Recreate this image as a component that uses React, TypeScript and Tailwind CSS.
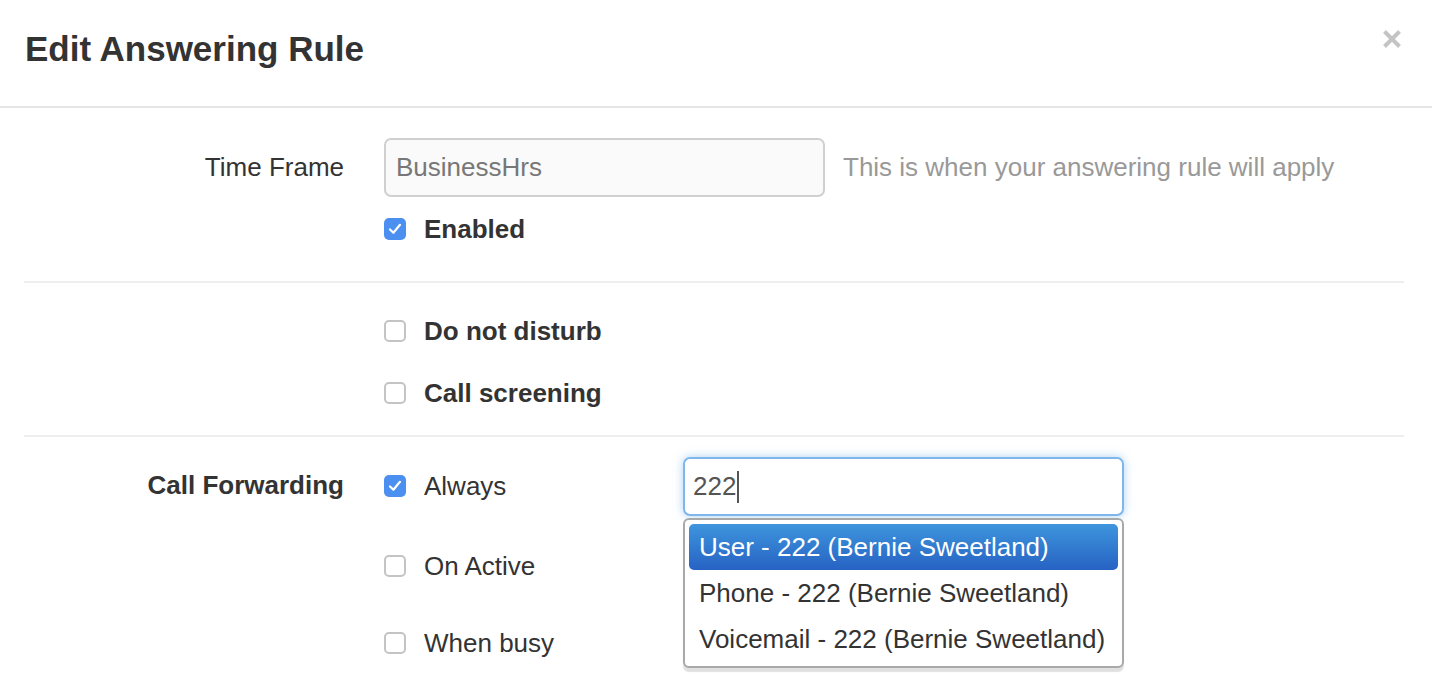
import { useState } from "react";

type BoxProps = {
  checked: boolean;
  onChange?: () => void;
};

function CheckBox({ checked, onChange }: BoxProps) {
  return (
    <button
      type="button"
      onClick={onChange}
      className={`flex h-[22px] w-[22px] shrink-0 items-center justify-center rounded-[5px] ${
        checked ? "bg-[#4b8ff0]" : "border-2 border-[#c4c4c4] bg-white"
      }`}
    >
      {checked && (
        <svg width="16" height="16" viewBox="0 0 16 16" fill="none">
          <path d="M3 8.5 L6.4 11.8 L13 3.8" stroke="white" strokeWidth="2.2" strokeLinecap="round" strokeLinejoin="round" />
        </svg>
      )}
    </button>
  );
}

type OptionProps = {
  label: string;
  checked: boolean;
  bold?: boolean;
  onChange: () => void;
};

function CheckRow({ label, checked, bold, onChange }: OptionProps) {
  return (
    <label className="flex h-[40px] items-center gap-[18px]">
      <CheckBox checked={checked} onChange={onChange} />
      <span className={bold ? "font-bold" : ""}>{label}</span>
    </label>
  );
}

const suggestions = [
  "User - 222 (Bernie Sweetland)",
  "Phone - 222 (Bernie Sweetland)",
  "Voicemail - 222 (Bernie Sweetland)",
];

export default function App() {
  const [enabled, setEnabled] = useState(true);
  const [dnd, setDnd] = useState(false);
  const [screening, setScreening] = useState(false);
  const [always, setAlways] = useState(true);
  const [onActive, setOnActive] = useState(false);
  const [whenBusy, setWhenBusy] = useState(false);
  const [active, setActive] = useState(0);

  return (
    <div className="h-[686px] w-[1432px] overflow-hidden bg-white font-['Liberation_Sans',Arial,sans-serif] text-[26px] text-[#333]">
      {/* header */}
      <div className="flex h-[108px] items-center justify-between border-b-2 border-[#e5e5e5] pl-[25px] pr-[31px]">
        <h4 className="pb-[10px] text-[35px] font-bold leading-none">Edit Answering Rule</h4>
        <button type="button" className="mb-[28px]" aria-label="Close">
          <svg width="18" height="18" viewBox="0 0 18 18">
            <path d="M1.5 1.5 L16.5 16.5 M16.5 1.5 L1.5 16.5" stroke="#c4c4c4" strokeWidth="4" />
          </svg>
        </button>
      </div>

      <div className="pl-[24px] pr-[28px]">
        {/* time frame */}
        <div className="border-b-2 border-[#eee] pb-[32px] pt-[30px]">
          <div className="grid grid-cols-[320px_1fr] gap-x-[40px]">
            <div className="flex h-[59px] items-center justify-end">Time Frame</div>
            <div className="flex items-center">
              <input
                readOnly
                value="BusinessHrs"
                className="h-[59px] w-[441px] rounded-[7px] border-2 border-[#d0d0d0] bg-[#fafafa] px-[10px] text-[#777] outline-none"
              />
              <span className="ml-[18px] text-[#999]">This is when your answering rule will apply</span>
            </div>
            <div />
            <div className="mt-[12px]">
              <CheckRow label="Enabled" bold checked={enabled} onChange={() => setEnabled((v) => !v)} />
            </div>
          </div>
        </div>

        {/* dnd / screening */}
        <div className="border-b-2 border-[#eee] pb-[22px] pt-[28px]">
          <div className="grid grid-cols-[320px_1fr] gap-x-[40px]">
            <div />
            <div className="flex flex-col gap-[22px]">
              <CheckRow label="Do not disturb" bold checked={dnd} onChange={() => setDnd((v) => !v)} />
              <CheckRow label="Call screening" bold checked={screening} onChange={() => setScreening((v) => !v)} />
            </div>
          </div>
        </div>

        {/* call forwarding */}
        <div className="pt-[20px]">
          <div className="grid grid-cols-[320px_1fr] gap-x-[40px]">
            <div className="flex h-[56px] items-center justify-end font-bold">Call Forwarding</div>
            <div className="flex flex-col">
              <div className="flex items-start">
                <div className="w-[299px] pt-[9px]">
                  <CheckRow label="Always" checked={always} onChange={() => setAlways((v) => !v)} />
                </div>
                <div className="relative">
                  <div className="flex h-[59px] w-[441px] items-center rounded-[7px] border-2 border-[#7fb6ec] bg-white px-[8px] text-[#555] shadow-[0_0_10px_rgba(102,175,233,0.55)]">
                    222
                    <span className="ml-[1px] h-[32px] w-[2px] bg-[#555]" />
                  </div>
                  <ul className="absolute left-0 top-[61px] z-10 w-[441px] rounded-[6px] border-2 border-[#a9a9a9] bg-white p-[4px] shadow-[0_4px_1px_rgba(0,0,0,0.12)]">
                    {suggestions.map((s, i) => (
                      <li
                        key={s}
                        onMouseEnter={() => setActive(i)}
                        className={`flex h-[46px] items-center rounded-[5px] px-[10px] ${
                          active === i ? "bg-linear-to-b from-[#3f95dd] to-[#2762c3] text-white" : "text-[#333]"
                        }`}
                      >
                        {s}
                      </li>
                    ))}
                  </ul>
                </div>
              </div>
              <div className="mt-[30px]">
                <CheckRow label="On Active" checked={onActive} onChange={() => setOnActive((v) => !v)} />
              </div>
              <div className="mt-[37px]">
                <CheckRow label="When busy" checked={whenBusy} onChange={() => setWhenBusy((v) => !v)} />
              </div>
            </div>
          </div>
        </div>
      </div>
    </div>
  );
}
